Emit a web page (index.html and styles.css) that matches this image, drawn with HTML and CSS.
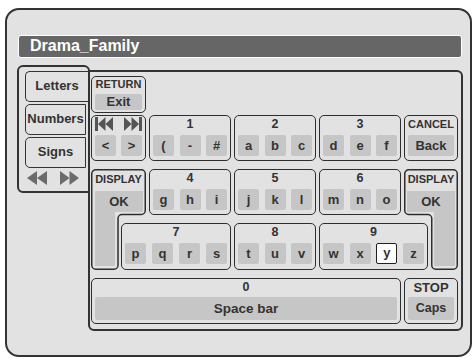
FILE: index.html
```html
<!DOCTYPE html>
<html lang="en">
<head>
  <meta charset="UTF-8">
  <meta name="viewport" content="width=device-width, initial-scale=1.0">
  <title>Drama_Family</title>
  <link rel="stylesheet" href="styles.css">
</head>
<body>
  <div class="panel">
    <div class="title">Drama_Family</div>
    <div class="board">
      <div class="tabs">
        <div class="tab active">Letters</div>
        <div class="tab">Numbers</div>
        <div class="tab">Signs</div>
        <div class="pager">
          <svg width="20" height="14" viewBox="0 0 20 14"><polygon points="10,0 0,7 10,14"/><polygon points="20,0 10,7 20,14"/></svg>
          <svg width="19" height="14" viewBox="0 0 19 14"><polygon points="0,0 9.5,7 0,14"/><polygon points="9.5,0 19,7 9.5,14"/></svg>
        </div>
      </div>
      <div class="frame">
        <div class="key key-return">
          <div class="lbl">RETURN</div>
          <div class="cap exit">Exit</div>
        </div>
        <div class="grid">
          <!-- row 1 -->
          <div class="key c12">
            <div class="icons">
              <svg width="18" height="14" viewBox="0 0 18 14"><rect x="0" y="0" width="3" height="14"/><polygon points="10.5,0 3,7 10.5,14"/><polygon points="18,0 10.5,7 18,14"/></svg>
              <svg width="18" height="14" viewBox="0 0 18 14"><polygon points="0,0 7.5,7 0,14"/><polygon points="7.5,0 15,7 7.5,14"/><rect x="15" y="0" width="3" height="14"/></svg>
            </div>
            <div class="subs"><span class="sub">&lt;</span><span class="sub">&gt;</span></div>
          </div>
          <div class="key c3">
            <div class="lbl num">1</div>
            <div class="subs"><span class="sub">(</span><span class="sub">-</span><span class="sub">#</span></div>
          </div>
          <div class="key c4">
            <div class="lbl num">2</div>
            <div class="subs"><span class="sub">a</span><span class="sub">b</span><span class="sub">c</span></div>
          </div>
          <div class="key c5">
            <div class="lbl num">3</div>
            <div class="subs"><span class="sub">d</span><span class="sub">e</span><span class="sub">f</span></div>
          </div>
          <div class="key c67">
            <div class="lbl">CANCEL</div>
            <div class="cap">Back</div>
          </div>

          <!-- rows 2-3 -->
          <div class="tall tall-left">
            <svg class="shape" width="55" height="101" viewBox="0 0 55 101">
              <rect class="fill" x="4" y="22" width="48" height="21"/>
              <rect class="fill" x="4" y="22" width="20" height="75"/>
              <path class="edge" d="M4.75,0.75 H50.25 A4,4 0 0 1 54.25,4.75 V41.5 A4,4 0 0 1 50.25,45.5 H31 A4,4 0 0 0 27,49.5 V96.25 A4,4 0 0 1 23,100.25 H4.75 A4,4 0 0 1 0.75,96.25 V4.75 A4,4 0 0 1 4.75,0.75 Z"/>
            </svg>
            <div class="lbl">DISPLAY</div>
            <div class="ok">OK</div>
          </div>
          <div class="key c3">
            <div class="lbl num">4</div>
            <div class="subs"><span class="sub">g</span><span class="sub">h</span><span class="sub">i</span></div>
          </div>
          <div class="key c4">
            <div class="lbl num">5</div>
            <div class="subs"><span class="sub">j</span><span class="sub">k</span><span class="sub">l</span></div>
          </div>
          <div class="key c5">
            <div class="lbl num">6</div>
            <div class="subs"><span class="sub">m</span><span class="sub">n</span><span class="sub">o</span></div>
          </div>
          <div class="tall tall-right">
            <svg class="shape" width="54" height="101" viewBox="0 0 54 101">
              <rect class="fill" x="3" y="22" width="48" height="21"/>
              <rect class="fill" x="30" y="22" width="21" height="75"/>
              <path class="edge" d="M4.75,0.75 H49.25 A4,4 0 0 1 53.25,4.75 V96.25 A4,4 0 0 1 49.25,100.25 H31.75 A4,4 0 0 1 27.75,96.25 V49.5 A4,4 0 0 0 23.75,45.5 H4.75 A4,4 0 0 1 0.75,41.5 V4.75 A4,4 0 0 1 4.75,0.75 Z"/>
            </svg>
            <div class="lbl">DISPLAY</div>
            <div class="ok">OK</div>
          </div>

          <!-- row 3 -->
          <div class="key c23">
            <div class="lbl num">7</div>
            <div class="subs"><span class="sub">p</span><span class="sub">q</span><span class="sub">r</span><span class="sub">s</span></div>
          </div>
          <div class="key c4">
            <div class="lbl num">8</div>
            <div class="subs"><span class="sub">t</span><span class="sub">u</span><span class="sub">v</span></div>
          </div>
          <div class="key c56">
            <div class="lbl num">9</div>
            <div class="subs"><span class="sub">w</span><span class="sub">x</span><span class="sub selected">y</span><span class="sub">z</span></div>
          </div>

          <!-- row 4 -->
          <div class="key c15">
            <div class="lbl num">0</div>
            <div class="cap bar">Space bar</div>
          </div>
          <div class="key c67">
            <div class="lbl big">STOP</div>
            <div class="cap bar">Caps</div>
          </div>
        </div>
      </div>
    </div>
  </div>
</body>
</html>
```

FILE: styles.css
```css
body { margin: 0; background-color: #fff; font-family: 'Liberation Sans', Arial, sans-serif; font-weight: bold; color: #333; }
.panel { box-sizing: border-box; width: 467px; height: 349px; margin: 8px 0 0 5px; padding: 25px 8px 0 11px; background-color: #e2e2e2; border: 2px solid #333; border-radius: 14px; }
.title { box-sizing: border-box; height: 23px; padding-left: 11px; background-color: #666; border: 1.5px solid #fff; border-radius: 3px; color: #fff; font-size: 16px; line-height: 20px; }
.board { display: flex; align-items: flex-start; margin: 7px 0 0 -1px; }

/* category tabs on the left */
.tabs { position: relative; z-index: 1; box-sizing: border-box; width: 73px; height: 128px; padding: 4px 0 0 6px; background-color: #e2e2e2; border: 2px solid #333; border-radius: 6px 6px 0 6px; }
.tab { box-sizing: border-box; width: 61px; height: 31px; margin-bottom: 2px; border: 1.5px solid #333; border-radius: 5px 0 0 5px; font-size: 13px; line-height: 28px; text-align: center; }
.tab.active { width: 63px; border-right: none; }
.pager { display: flex; gap: 13px; margin: 3px 0 0 2px; }
.pager svg { fill: #6b6b6b; }

/* keyboard */
.frame { box-sizing: border-box; width: 375px; height: 261px; margin: 5px 0 0 -2px; padding: 4px 3px 5px 1px; border: 2px solid #333; border-radius: 0 6px 6px 6px; }
.grid { display: grid; grid-template-columns: 27px 25px 82px 82px 82px 24px 27px; grid-template-rows: 46px 46px 47px 46px; column-gap: 3px; row-gap: 8px; margin-top: 2px; }
.key { box-sizing: border-box; display: flex; flex-direction: column; border: 1.5px solid #2e2e2e; border-radius: 5px; }
.key-return { width: 55px; height: 37px; }
.c12 { grid-column: 1 / 3; }
.c3 { grid-column: 3; }
.c4 { grid-column: 4; }
.c5 { grid-column: 5; }
.c67 { grid-column: 6 / 8; }
.c23 { grid-column: 2 / 4; grid-row: 3; }
.c56 { grid-column: 5 / 7; grid-row: 3; }
.c15 { grid-column: 1 / 6; grid-row: 4; }

.lbl { height: 19px; font-size: 11px; line-height: 17px; text-align: center; }
.lbl.num { font-size: 12.5px; }
.lbl.big { font-size: 13px; }
.key-return .lbl { height: 17px; line-height: 15px; }
.icons { display: flex; justify-content: space-between; height: 19px; padding: 1px 3px 0; box-sizing: border-box; }
.icons svg { fill: #555; }
.subs { display: flex; justify-content: space-between; padding: 0 3px; }
.sub { box-sizing: border-box; width: 21px; height: 21px; background-color: #c6c6c6; border-radius: 2px; font-size: 13px; line-height: 21px; text-align: center; }
.sub.selected { background-color: #fff; border: 1.5px solid #222; line-height: 18px; }
.cap { height: 21px; margin: 0 3px; background-color: #c6c6c6; border-radius: 2px; font-size: 13px; line-height: 21px; text-align: center; }
.cap.exit { height: 16px; line-height: 16px; }
.cap.bar { height: 23px; margin-top: -1px; line-height: 23px; }
.c15 .cap.bar { font-size: 13.5px; }
.c67 .cap.bar { font-size: 12.5px; }

/* L-shaped DISPLAY keys */
.tall { position: relative; grid-row: 2 / 4; }
.tall-left { grid-column: 1 / 3; }
.tall-right { grid-column: 6 / 8; }
.tall .shape { position: absolute; left: 0; top: 0; }
.tall .fill { fill: #c6c6c6; }
.tall .edge { fill: none; stroke: #2e2e2e; stroke-width: 1.5; }
.tall .lbl { position: relative; height: 22px; line-height: 21px; }
.tall .ok { position: relative; width: 48px; height: 21px; margin-left: 4px; font-size: 13px; line-height: 21px; text-align: center; }
.tall-right .ok { margin-left: 3px; }
```
